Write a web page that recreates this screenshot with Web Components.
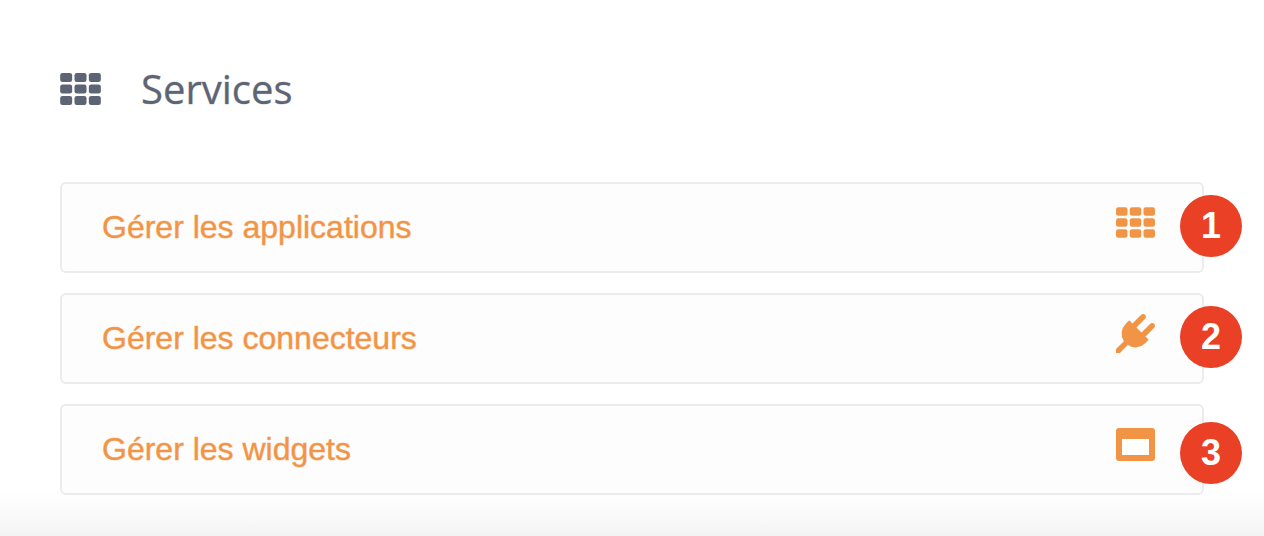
<!DOCTYPE html>
<html lang="fr">
<head>
<meta charset="utf-8">
<meta name="viewport" content="width=device-width, initial-scale=1">
<title>Services</title>
<style>
  body { margin: 0; background: #fff; }
</style>
</head>
<body>
<service-page>
  <service-heading>Services</service-heading>
  <service-card icon="grid" href="#applications" step="1">Gérer les applications</service-card>
  <service-card icon="plug" href="#connecteurs" step="2">Gérer les connecteurs</service-card>
  <service-card icon="window" href="#widgets" step="3" class="low">Gérer les widgets</service-card>
</service-page>
<script>
  const cells = [0, 1, 2].flatMap(r => [0, 1, 2].map(c =>
    `<rect x="${c * 43}" y="${r * 34.5}" width="36" height="27" rx="7"/>`)).join('');
  const icons = {
    grid: `<svg viewBox="0 0 122 96" aria-hidden="true">${cells}</svg>`,
    plug: `<svg viewBox="0 0 1792 1792" aria-hidden="true"><path d="M1755 453q37 38 37 90.5t-37 90.5l-401 400 150 150-160 160q-163 163-389.500 186.500t-411.500-100.500l-362 362h-181v-181l362-362q-124-185-100.500-411.500t186.500-389.500l160-160 150 150 400-401q38-37 91-37t90 37 37 90.500-37 90.500l-400 401 234 234 401-400q38-37 91-37t90 37z"/></svg>`,
    window: `<svg viewBox="0 0 39 39" aria-hidden="true"><rect y="3" width="39" height="33" rx="3"/><rect x="6" y="14" width="27" height="16" fill="#fff"/></svg>`
  };

  class UiIcon extends HTMLElement {
    connectedCallback() {
      this.attachShadow({ mode: 'open' }).innerHTML = `
        <style>
          :host { display: flex; flex: none; }
          svg { width: 100%; height: 100%; fill: currentColor; }
        </style>${icons[this.getAttribute('name')]}`;
    }
  }

  class StepBadge extends HTMLElement {
    connectedCallback() {
      this.attachShadow({ mode: 'open' }).innerHTML = `
        <style>
          :host {
            display: flex; align-items: center; justify-content: center;
            width: 62px; height: 62px; border-radius: 50%;
            background: #ea4025; color: #fff;
            font: bold 36px/40px "Liberation Sans", Arial, sans-serif;
          }
        </style><slot></slot>`;
    }
  }

  class ServiceHeading extends HTMLElement {
    connectedCallback() {
      this.attachShadow({ mode: 'open' }).innerHTML = `
        <style>
          :host { display: block; margin-bottom: 66px; }
          h1 {
            display: flex; align-items: center; gap: 40px; margin: 0;
            color: #5d6474; font: 400 40px/54px "Open Sans", "Noto Sans", sans-serif;
            -webkit-text-stroke: 1px rgb(93 100 116 / 30%);
          }
          ui-icon { width: 41px; height: 32px; }
        </style>
        <h1><ui-icon name="grid"></ui-icon><slot></slot></h1>`;
    }
  }

  class ServiceCard extends HTMLElement {
    connectedCallback() {
      this.attachShadow({ mode: 'open' }).innerHTML = `
        <style>
          :host { display: block; position: relative; }
          a {
            display: flex; align-items: center; justify-content: space-between;
            padding: 19px 47px 19px 40px;
            border: 2px solid #ebebf0; border-radius: 6px; background: #fdfdfd;
            color: #f29446; text-decoration: none;
            font: 400 32px/37px "Liberation Sans", Arial, sans-serif;
            -webkit-text-stroke: 1px rgb(242 148 70 / 45%);
          }
          ui-icon { width: 39px; height: 39px; margin-bottom: 10px; }
          step-badge { position: absolute; top: 13px; right: -38px; }
          :host(.low) step-badge { top: 18px; }
        </style>
        <a href="${this.getAttribute('href')}"><span><slot></slot></span><ui-icon name="${this.getAttribute('icon')}"></ui-icon></a>
        <step-badge>${this.getAttribute('step')}</step-badge>`;
    }
  }

  class ServicePage extends HTMLElement {
    connectedCallback() {
      this.attachShadow({ mode: 'open' }).innerHTML = `
        <style>
          :host {
            display: block; box-sizing: border-box; min-height: 100vh;
            padding: 62px 60px 40px;
            background: linear-gradient(to top, #f3f3f3, #fafafa 20px, #fff 48px);
          }
          main { display: flex; flex-direction: column; }
          ::slotted(service-card:not(:last-child)) { margin-bottom: 20px; }
        </style>
        <main><slot></slot></main>`;
    }
  }

  customElements.define('ui-icon', UiIcon);
  customElements.define('step-badge', StepBadge);
  customElements.define('service-heading', ServiceHeading);
  customElements.define('service-card', ServiceCard);
  customElements.define('service-page', ServicePage);
</script>
</body>
</html>
